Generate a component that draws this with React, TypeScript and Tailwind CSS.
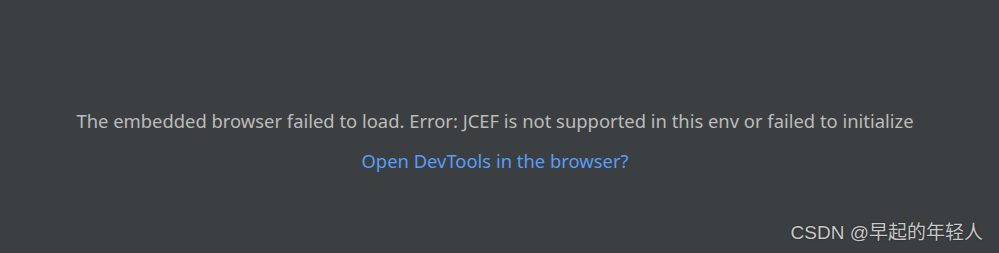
export default function App() {
  return (
    <div className="relative h-[253px] w-[999px] overflow-hidden bg-[#3c3f41] font-['Noto_Sans',sans-serif]">
      <div className="flex flex-col items-center pt-[108px] pr-[9px]">
        <p className="text-[18.4px] leading-[26px] text-[#bbbbbb]">
          The embedded browser failed to load. Error: JCEF is not supported in this env or failed to initialize
        </p>
        <a className="mt-[14px] text-[18.4px] leading-[26px] text-[#589df6]">Open DevTools in the browser?</a>
      </div>
      <span className="absolute right-[16px] top-[220px] text-[19px] leading-[26px] text-[#c8c8c8] font-['Liberation_Sans','Noto_Sans_CJK_SC',sans-serif] [text-shadow:0_0_2px_rgba(0,0,0,0.6)]">
        CSDN @早起的年轻人
      </span>
    </div>
  );
}
